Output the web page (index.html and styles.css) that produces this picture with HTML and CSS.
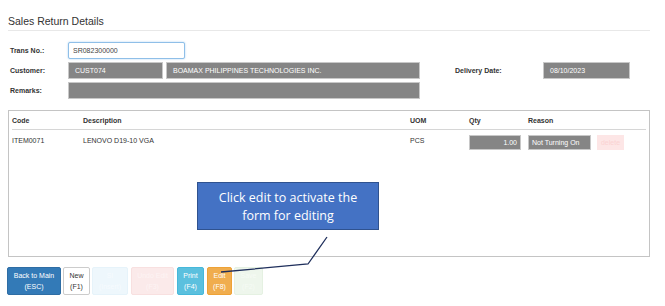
FILE: index.html
```html
<!DOCTYPE html>
<html lang="en">
  <head>
    <meta charset="UTF-8" />
    <meta name="viewport" content="width=device-width, initial-scale=1.0" />
    <title>Sales Return Details</title>
    <link rel="stylesheet" href="styles.css">
  </head>
  <body>
    <div class="page">
      <h1 class="title">Sales Return Details</h1>

      <div class="form">
        <div class="form-row">
          <label class="label">Trans No.:</label>
          <input class="input-trans" type="text" value="SR082300000" />
        </div>
        <div class="form-row">
          <label class="label">Customer:</label>
          <div class="box box-code">CUST074</div>
          <div class="box box-name">BOAMAX PHILIPPINES TECHNOLOGIES INC.</div>
          <label class="label label-date">Delivery Date:</label>
          <div class="box box-date">08/10/2023</div>
        </div>
        <div class="form-row">
          <label class="label">Remarks:</label>
          <div class="box box-remarks"></div>
        </div>
      </div>

      <div class="table">
        <div class="table-row table-head">
          <span>Code</span>
          <span>Description</span>
          <span>UOM</span>
          <span>Qty</span>
          <span>Reason</span>
          <span></span>
        </div>
        <div class="table-row">
          <span>ITEM0071</span>
          <span>LENOVO D19-10 VGA</span>
          <span>PCS</span>
          <span><span class="box box-qty">1.00</span></span>
          <span><span class="box box-reason">Not Turning On</span></span>
          <span><span class="btn-delete">delete</span></span>
        </div>
      </div>

      <div class="actions">
        <button class="btn btn-back">Back to Main<br />(ESC)</button>
        <button class="btn btn-new">New<br />(F1)</button>
        <button class="btn btn-si">SI<br />(Insert)</button>
        <button class="btn btn-undo">Undo Edit<br />(F3)</button>
        <button class="btn btn-print">Print<br />(F4)</button>
        <button class="btn btn-edit">Edit<br />(F8)</button>
        <button class="btn btn-save">Save<br />(F2)</button>
      </div>
    </div>

    <div class="callout">Click edit to activate the form for editing</div>
    <svg class="connector" width="665" height="306" viewBox="0 0 665 306">
      <polyline points="327,237 308,264 221,272" fill="none" stroke="#1f2f5c" stroke-width="1.3" />
    </svg>
  </body>
</html>
```

FILE: styles.css
```css
*,
*::before,
*::after {
  box-sizing: border-box;
}
* {
  margin: 0;
}
body {
  background-color: #ffffff;
  font-family: "Liberation Sans", Arial, sans-serif;
  font-size: 7px;
  color: #333333;
  width: 665px;
  height: 306px;
  overflow: hidden;
  position: relative;
}

.page {
  padding: 0 15px 0 8px;
}

.title {
  font-size: 10.5px;
  font-weight: normal;
  line-height: 14px;
  padding-top: 14px;
  padding-bottom: 2px;
  border-bottom: 1px solid #e8e8e8;
  color: #333333;
}

.form {
  margin-top: 11px;
  display: flex;
  flex-direction: column;
  gap: 3px;
}

.form-row {
  display: flex;
  align-items: center;
  height: 17px;
}

.label {
  width: 60px;
  padding-left: 2px;
  font-weight: bold;
  color: #333333;
}

.input-trans {
  width: 117px;
  height: 17px;
  border: 1px solid #8fbfe8;
  border-radius: 2px;
  box-shadow: 0 0 2px rgba(102, 175, 233, 0.6);
  font-family: inherit;
  font-size: 7px;
  padding: 0 4px;
  color: #444444;
}

.box {
  display: flex;
  align-items: center;
  height: 17px;
  background-color: #858585;
  border: 1px solid #c8c8c8;
  color: #ffffff;
  padding: 0 6px;
}

.box-code {
  width: 95px;
}
.box-name {
  width: 254px;
  margin-left: 3px;
}
.label-date {
  width: 90px;
  margin-left: 33px;
}
.box-date {
  width: 87px;
}
.box-remarks {
  width: 352px;
}

.table {
  margin-top: 11px;
  width: 642px;
  height: 147px;
  border: 1px solid #c4c4c4;
  padding: 0 3px;
}

.table-row {
  display: grid;
  grid-template-columns: 71px 327px 59px 59px 69px auto;
  align-items: center;
  height: 21px;
}

.table-head {
  height: 19px;
  font-weight: bold;
  border-bottom: 1px solid #d6d6d6;
}

.box-qty {
  width: 52px;
  height: 15px;
  justify-content: flex-end;
  padding: 0 3px;
  margin-top: 3px;
}

.box-reason {
  width: 63px;
  height: 15px;
  padding: 0 3px;
  margin-top: 3px;
}

.btn-delete {
  display: flex;
  align-items: center;
  justify-content: center;
  width: 27px;
  height: 15px;
  margin-top: 3px;
  background-color: #fde6e6;
  color: #fbd2d2;
}

.actions {
  margin-top: 10px;
  display: flex;
  gap: 2px;
  margin-left: -1px;
}

.btn {
  height: 28px;
  border: 1px solid transparent;
  border-radius: 2px;
  font-family: inherit;
  font-size: 7px;
  line-height: 11px;
  color: #ffffff;
  padding: 0;
}

.btn-back {
  width: 54px;
  background-color: #337ab7;
  border-color: #2e6da4;
}
.btn-new {
  width: 27px;
  background-color: #ffffff;
  border-color: #cccccc;
  color: #333333;
}
.btn-si {
  width: 36px;
  background-color: #eef7fc;
  border-color: #e6f3fa;
  color: #f7fbfe;
}
.btn-undo {
  width: 43px;
  margin-left: 1px;
  background-color: #fbeaea;
  border-color: #f8e0e0;
  color: #fdf4f4;
}
.btn-print {
  width: 27px;
  margin-left: 1px;
  background-color: #5bc0de;
  border-color: #46b8da;
}
.btn-edit {
  width: 25px;
  margin-left: 1px;
  background-color: #f0ad4e;
  border-color: #eea236;
}
.btn-save {
  width: 29px;
  background-color: #eef6ec;
  border-color: #e5f1e2;
  color: #f6fbf5;
}

.callout {
  position: absolute;
  left: 197px;
  top: 182px;
  width: 182px;
  height: 48px;
  background-color: #4472c4;
  border: 1px solid #2f528f;
  color: #ffffff;
  font-family: "Open Sans", "Liberation Sans", sans-serif;
  font-size: 12.5px;
  line-height: 18px;
  text-align: center;
  padding: 6px 10px 0;
}

.connector {
  position: absolute;
  left: 0;
  top: 0;
  pointer-events: none;
}
```
